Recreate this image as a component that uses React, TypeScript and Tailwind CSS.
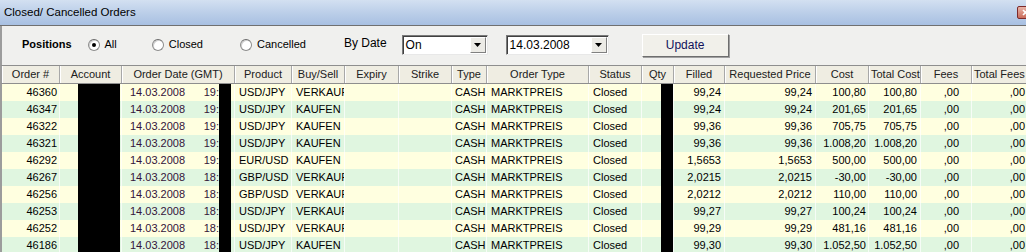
import React from "react";

// ─── Data ─────────────────────────────────────────────────────────────────────

const ORDERS = [
    { id: "46360", time: "19:", product: "USD/JPY", side: "VERKAUF", filled: "99,24", requested: "99,24", cost: "100,80" },
    { id: "46347", time: "19:", product: "USD/JPY", side: "KAUFEN", filled: "99,24", requested: "99,24", cost: "201,65" },
    { id: "46322", time: "19:", product: "USD/JPY", side: "KAUFEN", filled: "99,36", requested: "99,36", cost: "705,75" },
    { id: "46321", time: "19:", product: "USD/JPY", side: "KAUFEN", filled: "99,36", requested: "99,36", cost: "1.008,20" },
    { id: "46292", time: "19:", product: "EUR/USD", side: "KAUFEN", filled: "1,5653", requested: "1,5653", cost: "500,00" },
    { id: "46267", time: "18:", product: "GBP/USD", side: "VERKAUF", filled: "2,0215", requested: "2,0215", cost: "-30,00" },
    { id: "46256", time: "18:", product: "GBP/USD", side: "VERKAUF", filled: "2,0212", requested: "2,0212", cost: "110,00" },
    { id: "46253", time: "18:", product: "USD/JPY", side: "VERKAUF", filled: "99,27", requested: "99,27", cost: "100,24" },
    { id: "46252", time: "18:", product: "USD/JPY", side: "VERKAUF", filled: "99,29", requested: "99,29", cost: "481,16" },
    { id: "46186", time: "18:", product: "USD/JPY", side: "KAUFEN", filled: "99,30", requested: "99,30", cost: "1.052,50" },
];

// first column is 58 + 2px left border = 60
const GRID = "grid grid-cols-[58px_62px_113px_57px_53px_54px_53px_35px_102px_53px_32px_51px_91px_53px_52px_51px_60px]";

const HEADERS: { label: string; left?: boolean }[] = [
    { label: "Order #" },
    { label: "Account" },
    { label: "Order Date (GMT)" },
    { label: "Product" },
    { label: "Buy/Sell" },
    { label: "Expiry" },
    { label: "Strike" },
    { label: "Type" },
    { label: "Order Type" },
    { label: "Status" },
    { label: "Qty" },
    { label: "Filled" },
    { label: "Requested Price" },
    { label: "Cost" },
    { label: "Total Cost", left: true },
    { label: "Fees" },
    { label: "Total Fees", left: true },
];

// ─── Small widgets ────────────────────────────────────────────────────────────

const Radio = ({ label, checked = false }: { label: string; checked?: boolean }) => (
    <label className="flex items-center gap-[5px]">
        <span className="w-[12px] h-[12px] rounded-full border border-[#8c8c8c] border-t-[#6a6a6a] bg-white flex items-center justify-center shadow-[inset_1px_1px_0_#d0d0d0]">
            {checked && <span className="w-[4px] h-[4px] rounded-full bg-black" />}
        </span>
        <span>{label}</span>
    </label>
);

const Combo = ({ value, width }: { value: string; width: string }) => (
    <div className={`${width} h-[20px] flex bg-white border border-t-[#7a7a7a] border-l-[#7a7a7a] border-r-[#e8e8e8] border-b-[#e8e8e8] shadow-[inset_1px_1px_0_#404040]`}>
        <span className="flex-1 pl-[3px] pt-[2px] text-[12px] leading-[15px]">{value}</span>
        <span className="w-[16px] h-[16px] mt-[1px] mr-[1px] bg-[#ecebe6] border border-t-white border-l-white border-r-[#808080] border-b-[#808080] flex items-center justify-center">
            <svg width="7" height="4" viewBox="0 0 7 4">
                <path d="M0 0h7L3.5 4z" fill="#000" />
            </svg>
        </span>
    </div>
);

const Blackout = ({ className }: { className: string }) => <span className={`block h-full bg-black shrink-0 ${className}`} />;

// ─── Component ────────────────────────────────────────────────────────────────

const App = () => {
    return (
        <div className="w-[1026px] h-[252px] overflow-hidden bg-[#f0f0ee] text-black font-['Liberation_Sans',Arial,sans-serif] text-[11px]">
            {/* title bar */}
            <div className="h-[25px] flex items-center bg-gradient-to-b from-[#d3e0f1] via-[#bccfe9] to-[#a8c0e2] pl-[4px]">
                <span className="text-[11.5px]">Closed/ Cancelled Orders</span>
                <span className="ml-auto mr-[-8px] w-[17px] h-[13px] rounded-[2px] border border-[#7d2a2a] bg-gradient-to-b from-[#e8b4a8] to-[#c86c5c] flex items-center justify-center">
                    <svg width="7" height="7" viewBox="0 0 7 7">
                        <path d="M1 1l5 5M6 1l-5 5" stroke="#fff" strokeWidth="1.6" />
                    </svg>
                </span>
            </div>
            <div className="h-px bg-[#707070]" />

            {/* toolbar */}
            <div className="h-[39px] border-l-2 border-[#9c9c9c] flex items-center pb-[2px]">
                <span className="ml-[20px] font-bold">Positions</span>
                <div className="ml-[16px]">
                    <Radio label="All" checked />
                </div>
                <div className="ml-[35px]">
                    <Radio label="Closed" />
                </div>
                <div className="ml-[37px]">
                    <Radio label="Cancelled" />
                </div>
                <span className="ml-[38px] text-[12px] pb-[3px]">By Date</span>
                <div className="ml-[15px]">
                    <Combo value="On" width="w-[86px]" />
                </div>
                <div className="ml-[18px]">
                    <Combo value="14.03.2008" width="w-[103px]" />
                </div>
                <button className="ml-[33px] mt-[1px] w-[87px] h-[23px] bg-[#f1f0ea] border border-t-white border-l-white border-r-[#6e6e6e] border-b-[#6e6e6e] shadow-[1px_1px_0_#a0a0a0] text-[12px] text-[#10105a]">
                    Update
                </button>
            </div>

            {/* header */}
            <div className={`${GRID} h-[19px] border-t border-b border-[#8e8e8e] bg-[#efede2] border-l-2 border-l-[#9c9c9c]`}>
                {HEADERS.map((h) => (
                    <div
                        key={h.label}
                        className={`flex items-center overflow-hidden whitespace-nowrap border-r border-[#a8a8a8] shadow-[inset_1px_0_0_#fff] ${h.left ? "pl-[2px]" : "justify-center"}`}
                    >
                        <span className="text-[#202020]">{h.label}</span>
                    </div>
                ))}
            </div>

            {/* rows */}
            <div className="border-l-2 border-[#9c9c9c]">
                {ORDERS.map((o, i) => (
                    <div
                        key={o.id}
                        className={`${GRID} h-[17px] leading-[17px] whitespace-nowrap ${i % 2 === 0 ? "bg-[#ffffe0]" : "bg-[#e0f6e0]"}`}
                    >
                        <div className="text-right pr-[2px] border-r border-white/70">{o.id}</div>
                        <div className="flex border-r border-white/70">
                            <Blackout className="ml-[18px] w-[42px]" />
                        </div>
                        <div className="flex overflow-hidden text-[#34143a] border-r border-white/70">
                            <span className="pl-[8px]">14.03.2008</span>
                            <span className="ml-auto">{o.time}</span>
                            <Blackout className="w-[12px] mr-[3px]" />
                        </div>
                        <div className="pl-[4px] overflow-hidden border-r border-white/70">{o.product}</div>
                        <div className="pl-[4px] overflow-hidden border-r border-white/70">{o.side}</div>
                        <div className="border-r border-white/70" />
                        <div className="border-r border-white/70" />
                        <div className="pl-[3px] overflow-hidden border-r border-white/70">CASH</div>
                        <div className="pl-[4px] overflow-hidden border-r border-white/70">MARKTPREIS</div>
                        <div className="pl-[4px] overflow-hidden border-r border-white/70">Closed</div>
                        <div className="flex border-r border-white/70">
                            <Blackout className="ml-[19px] w-[12px]" />
                        </div>
                        <div className="text-right pr-[3px] border-r border-white/70">{o.filled}</div>
                        <div className="text-right pr-[3px] border-r border-white/70">{o.requested}</div>
                        <div className="text-right pr-[2px] border-r border-white/70">{o.cost}</div>
                        <div className="text-right pr-[3px] border-r border-white/70">{o.cost}</div>
                        <div className="text-right pr-[12px] border-r border-white/70">,00</div>
                        <div className="text-right pr-[7px]">,00</div>
                    </div>
                ))}
            </div>
        </div>
    );
};

export default App;
